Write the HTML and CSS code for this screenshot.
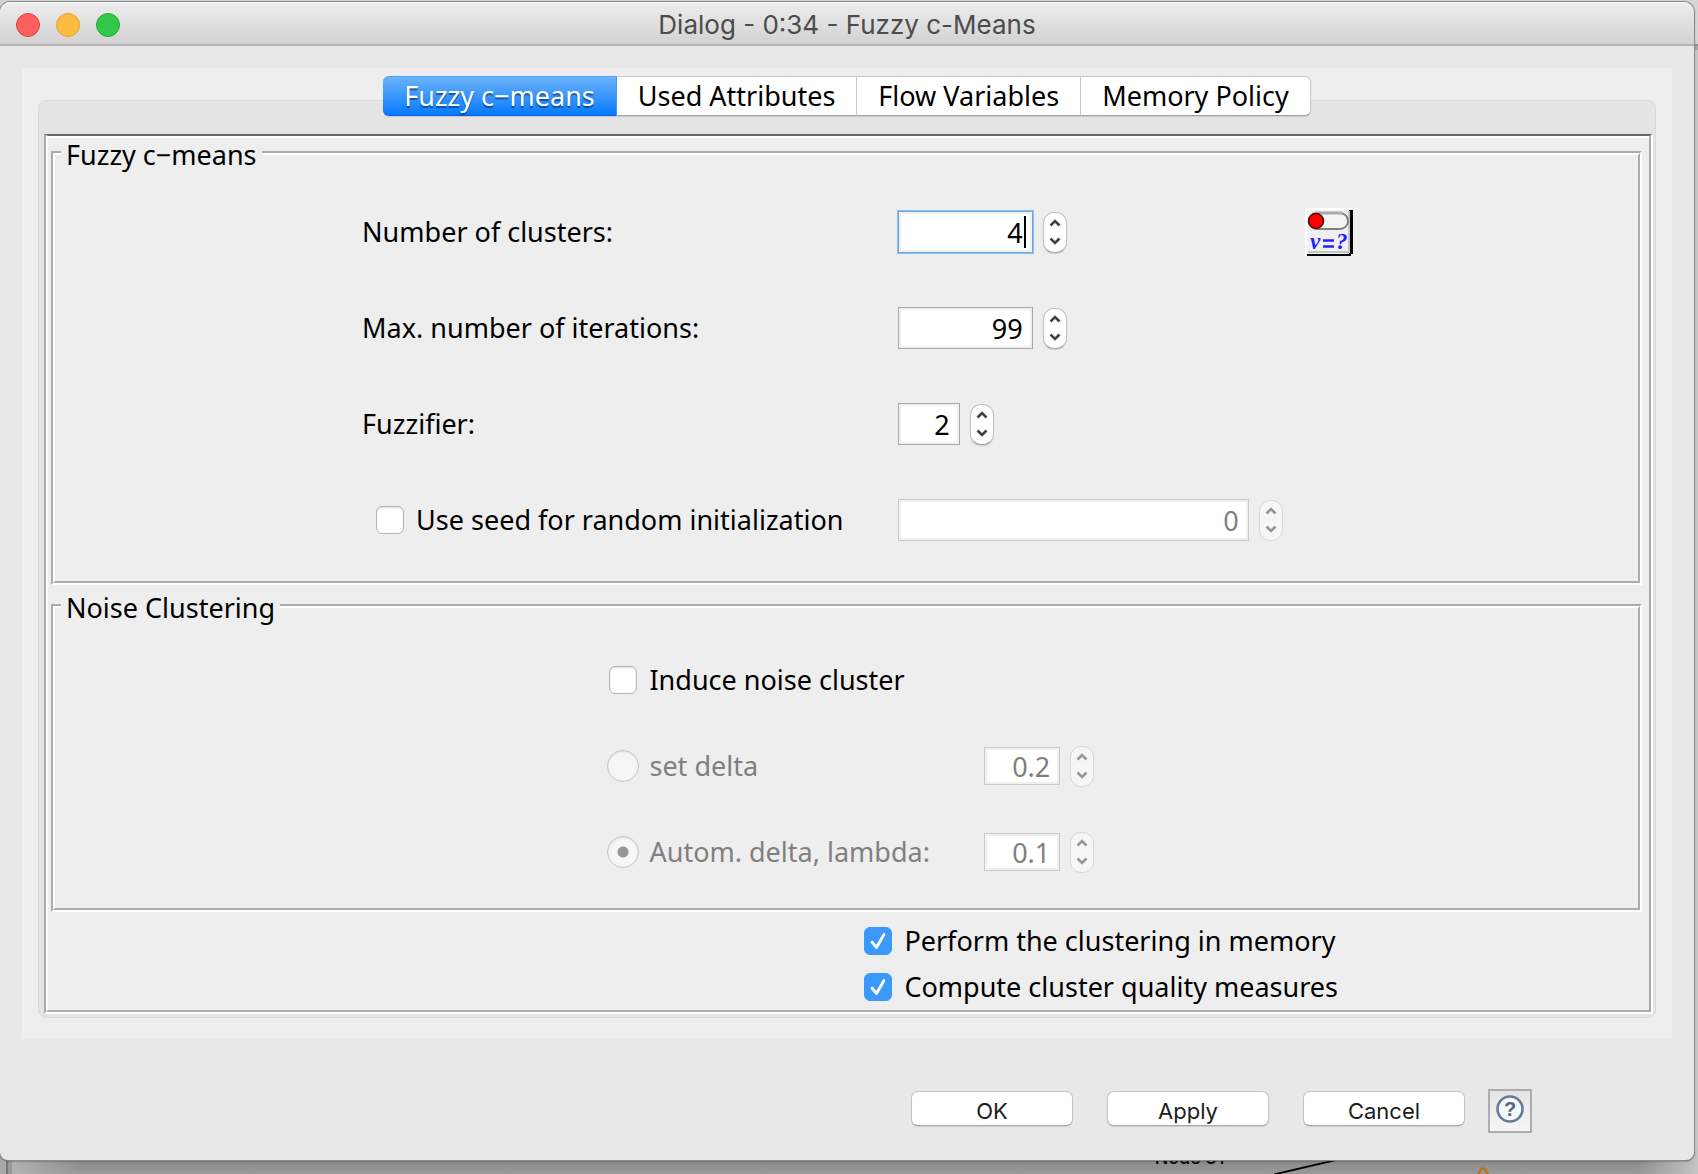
FILE: index.html
```html
<!DOCTYPE html>
<html lang="en">
<head>
<meta charset="utf-8">
<title>Dialog - 0:34 - Fuzzy c-Means</title>
<link rel="stylesheet" href="styles.css">
</head>
<body>
<svg class="symbols" width="0" height="0" aria-hidden="true">
  <symbol id="up" viewBox="0 0 12 8"><path d="M1.500 6.500 6 2l4.500 4.500" fill="none" stroke="currentColor" stroke-width="2.600"/></symbol>
  <symbol id="down" viewBox="0 0 12 8"><path d="M1.500 1.500 6 6l4.500-4.500" fill="none" stroke="currentColor" stroke-width="2.600"/></symbol>
</svg>
<div class="desktop">
  <div class="workflow">
    <span class="node-name">Node 31</span>
    <svg class="connection" width="64" height="14" viewBox="0 0 64 14" aria-hidden="true"><path d="M0 14.500 64-.5" stroke="#000" stroke-width="1.800"/></svg>
    <svg class="warning" width="12" height="7" viewBox="0 0 12 7" aria-hidden="true"><path d="M1 8 4.500 1.500h3L11 8" fill="none" stroke="#b8741c" stroke-width="2.400"/></svg>
  </div>
  <main class="window">
    <header class="titlebar">
      <div class="lights">
        <button class="light light-close" type="button" aria-label="Close"></button>
        <button class="light light-min" type="button" aria-label="Minimize"></button>
        <button class="light light-zoom" type="button" aria-label="Zoom"></button>
      </div>
      <h1 class="title">Dialog - 0:34 - Fuzzy c-Means</h1>
    </header>

    <form class="form">
      <div class="notebook">
        <div class="tabs" role="tablist">
          <button class="tab tab-active" type="button" role="tab" aria-selected="true">Fuzzy c−means</button>
          <button class="tab" type="button" role="tab" aria-selected="false">Used Attributes</button>
          <button class="tab" type="button" role="tab" aria-selected="false">Flow Variables</button>
          <button class="tab" type="button" role="tab" aria-selected="false">Memory Policy</button>
        </div>
        <div class="pane">
          <div class="page">
            <fieldset class="group">
              <legend class="legend">Fuzzy c−means</legend>
              <div class="rows">
                <div class="row">
                  <label class="label" for="clusters">Number of clusters:</label>
                  <div class="spinner">
                    <div class="focused"><input class="field field-m" id="clusters" type="text" inputmode="numeric" value="4"><span class="caret"></span></div>
                    <div class="stepper">
                      <button class="step" type="button" aria-label="Increase"><svg class="chevron"><use href="#up"/></svg></button>
                      <button class="step" type="button" aria-label="Decrease"><svg class="chevron"><use href="#down"/></svg></button>
                    </div>
                  </div>
                  <button class="variable" type="button" aria-label="Flow variable">
                    <svg width="48" height="48" viewBox="0 0 48 48">
                      <path d="M0 0h46v46H0z" fill="#f0f0f0"/>
                      <path d="M0 48V0h46v2H2v44z" fill="#fff"/>
                      <path d="M44 2h4v44h-2v2H2v-2h42z" fill="#000"/>
                      <path d="M43 3h2v42H3v-2h40z" fill="#c4c4c4"/>
                      <rect x="4" y="5" width="39" height="16" rx="8" fill="#f4f4f4" stroke="#808080" stroke-width="2"/>
                      <path d="M11 5h26" stroke="#aaa" stroke-width="3"/>
                      <circle cx="11" cy="13" r="7.500" fill="#f00" stroke="#500" stroke-width="1.500"/>
                      <text class="variable-text" x="5" y="41">v</text>
                      <path d="M18 32.500h11M18 38.500h11" stroke="#22f" stroke-width="2.400"/>
                      <text class="variable-text" x="31" y="41">?</text>
                    </svg>
                  </button>
                </div>
                <div class="row">
                  <label class="label" for="iterations">Max. number of iterations:</label>
                  <div class="spinner">
                    <input class="field field-m" id="iterations" type="text" inputmode="numeric" value="99">
                    <div class="stepper">
                      <button class="step" type="button" aria-label="Increase"><svg class="chevron"><use href="#up"/></svg></button>
                      <button class="step" type="button" aria-label="Decrease"><svg class="chevron"><use href="#down"/></svg></button>
                    </div>
                  </div>
                </div>
                <div class="row">
                  <label class="label" for="fuzzifier">Fuzzifier:</label>
                  <div class="spinner">
                    <input class="field field-s" id="fuzzifier" type="text" inputmode="numeric" value="2">
                    <div class="stepper">
                      <button class="step" type="button" aria-label="Increase"><svg class="chevron"><use href="#up"/></svg></button>
                      <button class="step" type="button" aria-label="Decrease"><svg class="chevron"><use href="#down"/></svg></button>
                    </div>
                  </div>
                </div>
                <div class="row">
                  <label class="label choice choice-indent"><input class="check" type="checkbox"><span>Use seed for random initialization</span></label>
                  <div class="spinner">
                    <input class="field field-l" type="text" inputmode="numeric" value="0" aria-label="Seed" disabled>
                    <div class="stepper stepper-off">
                      <button class="step" type="button" aria-label="Increase" disabled><svg class="chevron"><use href="#up"/></svg></button>
                      <button class="step" type="button" aria-label="Decrease" disabled><svg class="chevron"><use href="#down"/></svg></button>
                    </div>
                  </div>
                </div>
              </div>
            </fieldset>

            <fieldset class="group">
              <legend class="legend">Noise Clustering</legend>
              <div class="rows">
                <div class="row row-noise">
                  <label class="label choice"><input class="check" type="checkbox"><span>Induce noise cluster</span></label>
                </div>
                <div class="row row-noise">
                  <label class="label choice choice-off"><input class="radio" type="radio" name="delta" disabled><span>set delta</span></label>
                  <div class="spinner">
                    <input class="field field-d" type="text" value="0.2" aria-label="Delta" disabled>
                    <div class="stepper stepper-off">
                      <button class="step" type="button" aria-label="Increase" disabled><svg class="chevron"><use href="#up"/></svg></button>
                      <button class="step" type="button" aria-label="Decrease" disabled><svg class="chevron"><use href="#down"/></svg></button>
                    </div>
                  </div>
                </div>
                <div class="row row-noise">
                  <label class="label choice choice-off"><input class="radio" type="radio" name="delta" checked disabled><span>Autom. delta, lambda:</span></label>
                  <div class="spinner">
                    <input class="field field-d" type="text" value="0.1" aria-label="Lambda" disabled>
                    <div class="stepper stepper-off">
                      <button class="step" type="button" aria-label="Increase" disabled><svg class="chevron"><use href="#up"/></svg></button>
                      <button class="step" type="button" aria-label="Decrease" disabled><svg class="chevron"><use href="#down"/></svg></button>
                    </div>
                  </div>
                </div>
              </div>
            </fieldset>

            <div class="options">
              <label class="option choice"><input class="check" type="checkbox" checked><span>Perform the clustering in memory</span></label>
              <label class="option choice"><input class="check" type="checkbox" checked><span>Compute cluster quality measures</span></label>
            </div>
          </div>
        </div>
      </div>

      <footer class="actions">
        <div class="buttons">
          <button class="button" type="button">OK</button>
          <button class="button" type="button">Apply</button>
          <button class="button" type="button">Cancel</button>
        </div>
        <button class="help" type="button" aria-label="Help">
          <svg width="40" height="40" viewBox="0 0 40 40">
            <circle cx="20" cy="18" r="12.500" fill="#f3f8fd" stroke="#677b96" stroke-width="2.600"/>
            <text class="help-text" x="20" y="25" text-anchor="middle">?</text>
          </svg>
        </button>
      </footer>
    </form>
  </main>
</div>
</body>
</html>
```
FILE: styles.css
```css
* { box-sizing: border-box; }

body {
  margin: 0;
  font-family: "Noto Sans", "Lucida Grande", sans-serif;
  font-size: 27px;
  line-height: 30px;
  color: #000;
}

button, input { font: inherit; color: inherit; margin: 0; padding: 0; }

.symbols { position: absolute; }

/* Desktop behind the dialog */
.desktop {
  position: relative;
  min-height: 100vh;
  padding: 2px 4px 14px 0;
  overflow: hidden;
  background: linear-gradient(#d4d4d4 0 44px, #8e8e8e 44px 46px, #a8a8a8 46px 50px, #c6c6c6 50px);
}

.workflow {
  position: absolute;
  inset: auto 0 0 0;
  height: 26px;
  background:
    linear-gradient(90deg, #a8a8a8 0 6px, #777 6px 8px, #999 8px 12px, transparent 12px),
    linear-gradient(90deg, #b8b8b8, rgba(184, 184, 184, 0) 80px calc(100% - 60px), #c4c4c4),
    linear-gradient(#888 12px, #9a9a9a);
}

.node-name {
  position: absolute;
  left: 68%;
  bottom: 4px;
  font: 500 18px/24px Inter, sans-serif;
}

.connection { position: absolute; left: 75%; bottom: 0; }
.warning { position: absolute; left: 87%; bottom: 0; }

/* Dialog window */
.window {
  position: relative;
  border-radius: 10px 10px 8px 8px;
  background: #e8e8e8;
  box-shadow: 0 0 0 1px #8c8c8c, 0 1px 2px #444;
}

.titlebar {
  display: grid;
  grid-template-columns: 1fr auto 1fr;
  align-items: center;
  height: 44px;
  padding: 3px 16px 0;
  border-bottom: 2px solid #b4b4b4;
  border-radius: 10px 10px 0 0;
  background: linear-gradient(#f6f6f6 0 1px, #ececec 2px, #d2d2d2);
}

.lights { display: flex; gap: 16px; }

.light {
  width: 24px;
  height: 24px;
  border: 1px solid #e0443e;
  border-radius: 50%;
  background: #fc605c;
}
.light-min { border-color: #dea034; background: #fdbc40; }
.light-zoom { border-color: #27aa35; background: #34c84a; }

.title {
  margin: 0;
  font: 400 26px/30px Inter, sans-serif;
  color: #4c4c4c;
}

.form { padding: 22px 22px 0; }

/* Tabs */
.notebook { padding: 8px 16px 21px; background: #eee; }

.tabs {
  position: relative;
  display: flex;
  justify-content: center;
  margin-bottom: -16px;
}

.tab {
  height: 40px;
  padding: 0 21px;
  border: 1px solid #c8c8c8;
  border-width: 1px 1px 1px 0;
  border-bottom-color: #a4a4a4;
  background: #fff;
  box-shadow: 0 1px 1px #ccc;
}
.tab:last-child { border-radius: 0 6px 6px 0; }

.tab-active {
  border-color: #4ba0f8 #2a8bff #0a60e8;
  border-radius: 6px 0 0 6px;
  background: linear-gradient(#6cb3fa, #067aff);
  color: #fff;
  text-shadow: 0 2px 1px rgba(0, 40, 100, .6);
}

.pane {
  padding: 33px 2px 3px 5px;
  border: 1px solid #dadada;
  border-radius: 8px;
  background: #e4e4e4;
}

.page {
  padding: 0 7px 0 3px;
  border: 4px groove #fff;
  border-top: 2px solid #666;
  background: #eee;
  box-shadow: inset 0 2px #fff;
}

/* Titled groups */
.group {
  min-width: 0;
  margin: 0;
  padding: 0;
  border: 4px groove #fff;
}
.group + .group { margin-top: 4px; }

.legend { margin-left: 6px; padding: 4px 5px 0; }

.rows { padding: 14px 0 13px; }

.row {
  display: grid;
  grid-template-columns: 536fr 408fr 333fr;
  align-items: center;
  height: 96px;
  padding-left: 19.4%;
}

.row-noise {
  grid-template-columns: 377fr 654fr;
  height: 86px;
  padding-left: 34.9%;
}

.choice { display: flex; align-items: center; gap: 10px; }
.choice-indent { padding-left: 12px; }
.choice-off { color: #808080; }

.check {
  appearance: none;
  width: 28px;
  height: 28px;
  margin: 0 2px;
  border: 1px solid #b6b6b6;
  border-radius: 6px;
  background: #fff;
  box-shadow: inset 0 1px 2px #ddd;
}
.check:checked {
  border-color: #3b99fc;
  background: #3b99fc url("data:image/svg+xml,%3Csvg xmlns='http://www.w3.org/2000/svg' viewBox='0 0 26 26'%3E%3Cpath d='M7 14l4.500 5.500L19 6.500' fill='none' stroke='%23fff' stroke-width='2.800' stroke-linecap='round' stroke-linejoin='round'/%3E%3C/svg%3E");
  box-shadow: none;
}

.radio {
  appearance: none;
  width: 32px;
  height: 32px;
  border: 1px solid #c6c6c6;
  border-radius: 50%;
  background: #f6f6f6;
  box-shadow: inset 0 1px 2px #ddd;
}
.radio:checked { background: radial-gradient(circle, #969696 5px, #f6f6f6 6px); }

/* Number fields */
.spinner { display: flex; align-items: center; gap: 10px; }

.field {
  display: block;
  height: 42px;
  padding: 0 9px;
  border: 1px solid #a8a8a8;
  border-radius: 0;
  outline: 0;
  background: #fff;
  box-shadow: inset 0 0 0 2px #f0f0f0;
  text-align: right;
}
.field-s { width: 62px; }
.field-m { width: 135px; }
.field-l { width: 351px; }
.field-d { width: 76px; height: 38px; }
.field:disabled { border-color: #cacaca; color: #808080; }

.focused { position: relative; outline: 1px solid #8fc0f2; }
.focused .field { border-color: #6ba2e0; }

.caret {
  position: absolute;
  top: 5px;
  right: 7px;
  width: 2px;
  height: 32px;
  background: #000;
}

.stepper {
  display: flex;
  flex-direction: column;
  width: 24px;
  height: 41px;
  padding: 2px 0;
  border: 1px solid #c4c4c4;
  border-bottom-color: #a8a8a8;
  border-radius: 11px;
  background: #fff;
  box-shadow: 0 1px 1px #ccc;
  color: #404040;
}
.stepper-off { border-color: #d8d8d8; background: #f6f6f6; box-shadow: none; color: #969696; }

.step {
  display: flex;
  flex: 1;
  align-items: center;
  justify-content: center;
  border: 0;
  background: none;
}

.chevron { width: 12px; height: 8px; }

.variable { width: 48px; height: 48px; border: 0; background: none; }
.variable svg, .help svg { display: block; }
.variable-text { font: italic bold 23px "Liberation Serif", serif; fill: #22f; }

.options { padding: 6px 0 0 51%; }
.option { height: 46px; }

/* Dialog buttons */
.actions {
  display: flex;
  justify-content: flex-end;
  gap: 23px;
  padding: 50px 140px 27px 0;
}

.buttons { display: flex; gap: 34px; padding-top: 2px; }

.button {
  width: 162px;
  height: 35px;
  padding-top: 5px;
  border: 1px solid #c4c4c4;
  border-bottom-color: #a8a8a8;
  border-radius: 7px;
  background: #fff;
  box-shadow: 0 1px 1px #ccc;
  font: 22px/28px Inter, sans-serif;
  color: #1c1c1c;
}

.help {
  width: 44px;
  height: 44px;
  border: 2px solid #adadad;
  background: linear-gradient(#e4e4e4, #f6f6f6);
}
.help-text { font: bold 20px "Liberation Sans", sans-serif; fill: #52647e; }
```
